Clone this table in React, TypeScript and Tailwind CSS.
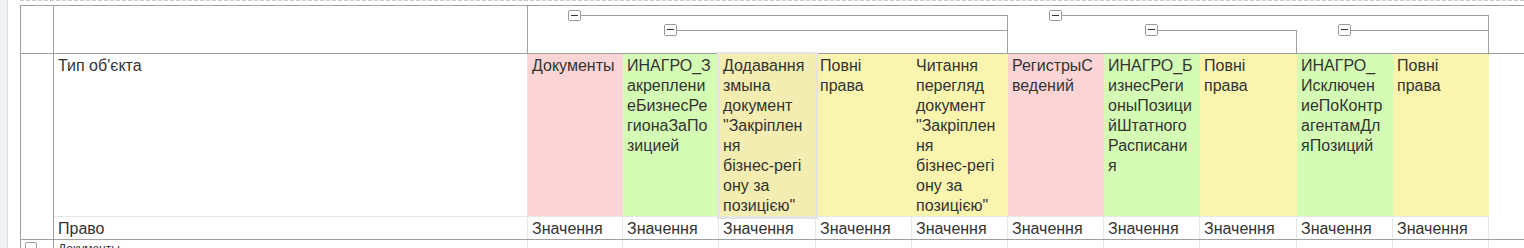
import React from 'react';

type Col = { wc: string; bg: string; lines: string[]; sel?: boolean };

const PINK = 'bg-[#fbd5d5]';
const GREEN = 'bg-[#d5fcb4]';
const YELLOW = 'bg-[#faf5ae]';
const SEL = 'bg-[#f3edb2]';

const cols: Col[] = [
  { wc: 'w-[95px]', bg: PINK, lines: ['Документы'] },
  { wc: 'w-[96px]', bg: GREEN, lines: ['ИНАГРО_З', 'акреплени', 'еБизнесРе', 'гионаЗаПо', 'зицией'] },
  {
    wc: 'w-[97px]',
    bg: SEL,
    sel: true,
    lines: ['Додавання', 'змына', 'документ', '"Закріплен', 'ня', 'бізнес-регі', 'ону за', 'позицією"'],
  },
  { wc: 'w-[96px]', bg: YELLOW, lines: ['Повні', 'права'] },
  {
    wc: 'w-[96px]',
    bg: YELLOW,
    lines: ['Читання', 'перегляд', 'документ', '"Закріплен', 'ня', 'бізнес-регі', 'ону за', 'позицією"'],
  },
  { wc: 'w-[96px]', bg: PINK, lines: ['РегистрыС', 'ведений'] },
  { wc: 'w-[96px]', bg: GREEN, lines: ['ИНАГРО_Б', 'изнесРеги', 'оныПозици', 'йШтатного', 'Расписани', 'я'] },
  { wc: 'w-[97px]', bg: YELLOW, lines: ['Повні', 'права'] },
  { wc: 'w-[96px]', bg: GREEN, lines: ['ИНАГРО_', 'Исключен', 'иеПоКонтр', 'агентамДл', 'яПозиций'] },
  { wc: 'w-[96px]', bg: YELLOW, lines: ['Повні', 'права'] },
];

function MinusBox({ x, y, h }: { x: number; y: number; h: number }) {
  const cy = y + Math.floor(h / 2);
  return (
    <g>
      <rect x={x + 0.5} y={y + 0.5} width={12} height={h} rx={2} fill="#fff" stroke="#9a9a9a" />
      <line x1={x + 3} x2={x + 10} y1={cy + 0.5} y2={cy + 0.5} stroke="#333" />
    </g>
  );
}

function GroupBrackets() {
  const c = '#a0a0a0';
  return (
    <svg width="996" height="47" className="block" shapeRendering="crispEdges">
      {/* group 1 */}
      <line x1={53} x2={479.5} y1={9.5} y2={9.5} stroke={c} />
      <line x1={479.5} x2={479.5} y1={9.5} y2={47} stroke={c} />
      <line x1={149} x2={479.5} y1={24.5} y2={24.5} stroke={c} />
      <MinusBox x={40} y={4} h={10} />
      <MinusBox x={136} y={18} h={11} />
      {/* group 2 */}
      <line x1={534} x2={960.5} y1={9.5} y2={9.5} stroke={c} />
      <line x1={960.5} x2={960.5} y1={9.5} y2={47} stroke={c} />
      <line x1={630} x2={768.5} y1={24.5} y2={24.5} stroke={c} />
      <line x1={768.5} x2={768.5} y1={24.5} y2={47} stroke={c} />
      <line x1={823} x2={960.5} y1={24.5} y2={24.5} stroke={c} />
      <MinusBox x={521} y={4} h={10} />
      <MinusBox x={617} y={18} h={11} />
      <MinusBox x={810} y={18} h={11} />
    </svg>
  );
}

export default function App() {
  return (
    <div className="w-[1524px] h-[248px] overflow-hidden bg-white flex font-['Liberation_Sans',Arial,sans-serif] text-[#333]">
      <div className="w-[8px] shrink-0 h-full bg-[#eef2f5] border-r border-[#d9dfe4]" />
      <div className="flex-1 ml-[12px] flex flex-col min-w-0">
        <div className="h-px shrink-0 bg-[repeating-linear-gradient(90deg,#c8c8c8_0_4px,transparent_4px_6px)]" />
        <div className="mt-[4px] border-t border-l border-[#a0a0a0] flex flex-col">
          {/* Row A: group header */}
          <div className="flex h-[48px] border-b border-[#a0a0a0]">
            <div className="w-[33px] shrink-0 border-r border-[#a0a0a0]" />
            <div className="w-[474px] shrink-0 border-r border-[#a0a0a0]" />
            <div className="flex-1 min-w-0">
              <GroupBrackets />
            </div>
          </div>

          {/* Rows B + C */}
          <div className="flex border-b border-[#a0a0a0] text-[16px] leading-[20px]">
            <div className="w-[33px] shrink-0 border-r border-[#a0a0a0]" />
            <div className="flex-1 flex flex-col min-w-0">
              <div className="flex h-[163px]">
                <div className="w-[474px] shrink-0 border-r border-b border-[#e6e6e6] pl-[4px] pt-[2px]">
                  Тип об'єкта
                </div>
                {cols.map((c, i) => (
                  <div
                    key={i}
                    className={`${c.wc} ${c.bg} shrink-0 border-b border-[#e6e6e6] pl-[4px] pt-[2px] whitespace-nowrap ${
                      c.sel ? 'relative z-10 shadow-[0_0_0_2px_#e4e4e2]' : ''
                    }`}
                  >
                    {c.lines.map((l, j) => (
                      <div key={j}>{l}</div>
                    ))}
                  </div>
                ))}
              </div>
              <div className="flex h-[22px]">
                <div className="w-[474px] shrink-0 border-r border-[#e6e6e6] pl-[4px] pt-[2px]">Право</div>
                {cols.map((c, i) => (
                  <div key={i} className={`${c.wc} shrink-0 border-r border-[#e6e6e6] pl-[4px] pt-[2px]`}>
                    Значення
                  </div>
                ))}
              </div>
            </div>
          </div>

          {/* Row D */}
          <div className="flex h-[20px]">
            <div className="w-[33px] shrink-0 border-r border-[#a0a0a0] pl-[4px] pt-[2px]">
              <div className="w-[12px] h-[12px] border border-[#a0a0a0] rounded-[2px] bg-white" />
            </div>
            <div className="w-[474px] shrink-0 border-r border-[#e6e6e6] pl-[4px] pt-[1px] text-[12px] leading-[16px]">
              Документы
            </div>
            {cols.map((c, i) => (
              <div key={i} className={`${c.wc} shrink-0 border-r border-[#e6e6e6]`} />
            ))}
          </div>
        </div>
      </div>
    </div>
  );
}
